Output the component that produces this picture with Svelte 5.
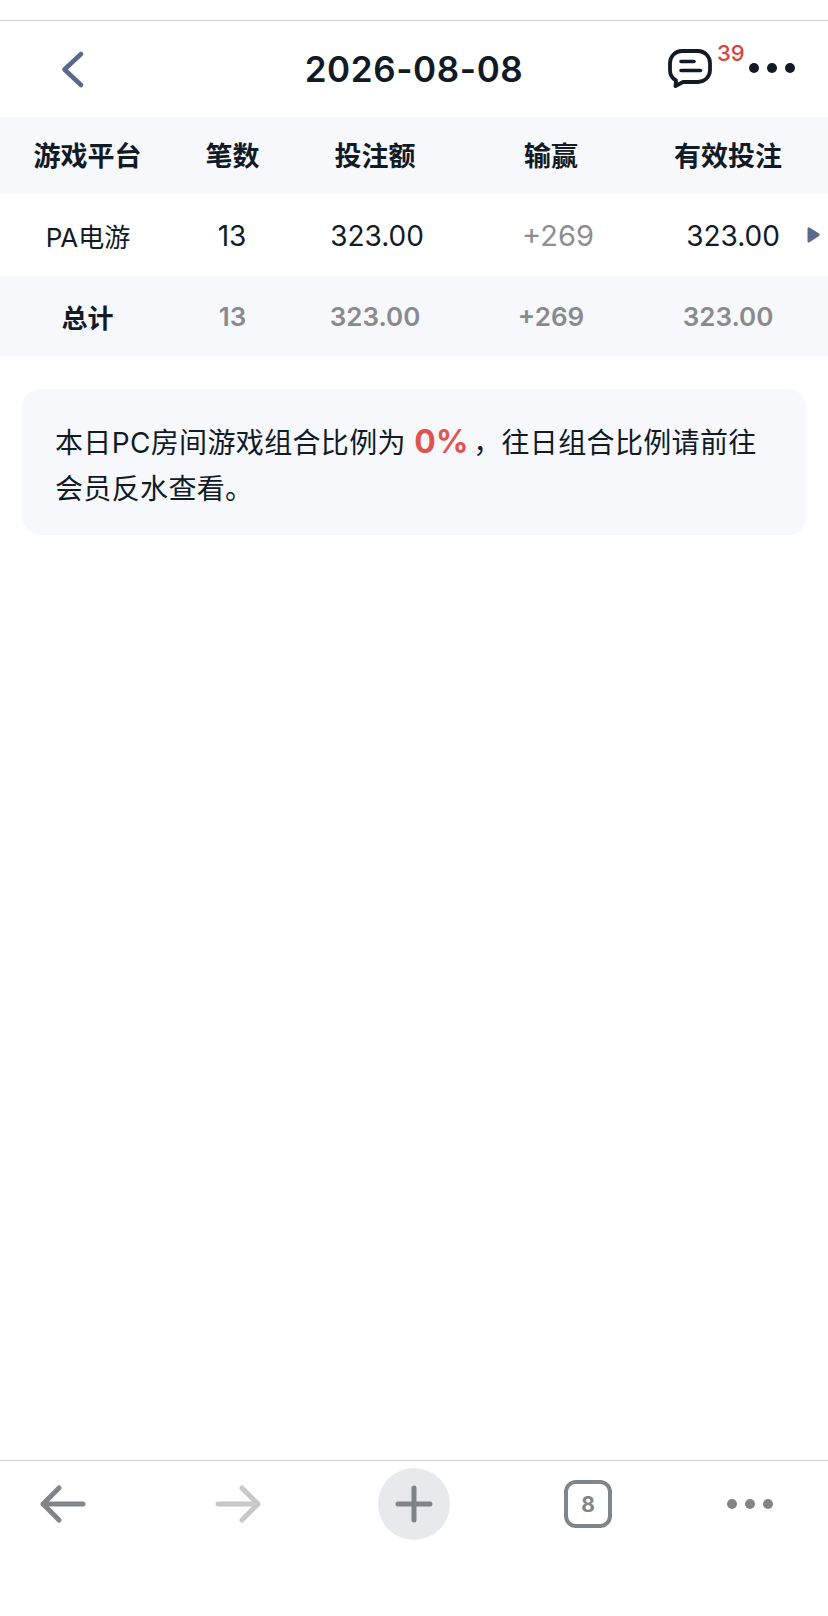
<script lang="ts">
	const head = ['游戏平台', '笔数', '投注额', '输赢', '有效投注'];
	const total = ['总计', '13', '323.00', '+269', '323.00'];
</script>

<div class="page">
	<header class="nav">
		<button class="back" type="button" aria-label="返回">
			<svg width="26" height="38" viewBox="0 0 26 38" fill="none">
				<path d="M22 3 L5.5 18.5 L22 34" stroke="#5a6a8c" stroke-width="4.5" stroke-linecap="round" stroke-linejoin="round" />
			</svg>
		</button>
		<h1>2026-08-08</h1>
		<div class="actions">
			<span class="msg">
				<svg width="46" height="42" viewBox="0 0 46 42" fill="none">
					<path d="M14 2 H30 A12 12 0 0 1 42 14 V21 A12 12 0 0 1 30 33 H15 L7.5 37 L8 31.5 A12 12 0 0 1 2 21 V14 A12 12 0 0 1 14 2 Z" stroke="#121a26" stroke-width="3.8" stroke-linejoin="round" />
					<path d="M13 12.5 H26 M13 21.5 H32.5" stroke="#121a26" stroke-width="3.6" stroke-linecap="round" />
				</svg>
				<sup>39</sup>
			</span>
			<span class="dots"><i></i><i></i><i></i></span>
		</div>
	</header>

	<div class="grid head">
		{#each head as label}
			<span>{label}</span>
		{/each}
	</div>

	<div class="grid row">
		<span class="game">PA电游</span>
		<span>13</span>
		<span>323.00</span>
		<span class="win">+269</span>
		<span>323.00</span>
		<svg class="more" width="14" height="18" viewBox="0 0 14 18"><path d="M2.5 1.5 L12 7.5 Q13.5 8.7 12 10 L2.5 16.2 Q0.5 17.2 0.5 15 V3 Q0.5 0.5 2.5 1.5 Z" fill="#5a6a8c" /></svg>
	</div>

	<div class="grid sum">
		{#each total as value, i}
			<span class:label={i === 0}>{value}</span>
		{/each}
	</div>

	<p class="note">本日PC房间游戏组合比例为 <b>0%</b> ，往日组合比例请前往会员反水查看。</p>

	<nav class="bar">
		<svg width="48" height="40" viewBox="0 0 48 40" fill="none" stroke="#808589" stroke-width="5" stroke-linecap="round" stroke-linejoin="round">
			<path d="M44 20 H4 M20 4 L4 20 L20 36" />
		</svg>
		<svg width="48" height="40" viewBox="0 0 48 40" fill="none" stroke="#c8c8c8" stroke-width="5" stroke-linecap="round" stroke-linejoin="round">
			<path d="M4 20 H44 M28 4 L44 20 L28 36" />
		</svg>
		<span class="add">
			<svg width="38" height="38" viewBox="0 0 38 38" fill="none" stroke="#7f8489" stroke-width="5" stroke-linecap="round">
				<path d="M19 3 V35 M3 19 H35" />
			</svg>
		</span>
		<span class="tabs">8</span>
		<span class="dots grey"><i></i><i></i><i></i></span>
	</nav>
</div>

<style>
	:global(body) {
		margin: 0;
		background: #fff;
	}

	.page {
		position: relative;
		display: flex;
		flex-direction: column;
		height: 1616px;
		box-sizing: border-box;
		padding-top: 20px;
		overflow: hidden;
		color: #121a26;
		font-family: Inter, 'Noto Sans CJK SC', sans-serif;
	}

	.nav {
		display: flex;
		align-items: center;
		justify-content: center;
		position: relative;
		height: 97px;
		border-top: 1px solid #cfcfd1;
		box-sizing: border-box;
	}

	.back {
		position: absolute;
		left: 59px;
		top: 30px;
		border: 0;
		background: none;
		padding: 0;
		height: 38px;
	}

	h1 {
		margin: 0;
		font-size: 35px;
		font-weight: 600;
		letter-spacing: 0.6px;
		line-height: 1;
	}

	.actions {
		position: absolute;
		right: 33px;
		top: 23px;
		display: flex;
		align-items: center;
	}

	.msg {
		position: relative;
		display: block;
		width: 46px;
		height: 42px;
		margin-right: 35px;
		top: 5px;
	}

	.msg sup {
		position: absolute;
		left: 49px;
		top: -7px;
		color: #d9423a;
		font-size: 22px;
		font-weight: 500;
		line-height: 1;
	}

	.dots {
		display: flex;
		gap: 8px;
		margin-top: 6px;
	}

	.dots i {
		width: 10px;
		height: 10px;
		border-radius: 50%;
		background: #121a26;
	}

	.grid {
		display: grid;
		align-items: center;
		text-align: center;
		grid-template-columns: 175px 115px 170px 182px 172px;
	}

	.head {
		height: 77px;
		box-sizing: border-box;
		padding-bottom: 2px;
		background: #f6f8fc;
		font-size: 27px;
		font-weight: 700;
	}

	.row {
		position: relative;
		height: 82px;
		padding-top: 1px;
		box-sizing: border-box;
		font-size: 28px;
		grid-template-columns: 176px 112px 178px 184px 166px;
	}

	.game {
		font-size: 26px;
	}

	.win {
		color: #8e8e8e;
		font-size: 29px;
	}

	.more {
		position: absolute;
		right: 7px;
		top: 32px;
	}

	.sum {
		height: 80px;
		background: #f6f8fc;
		color: #8a8a8c;
		font-size: 26px;
		font-weight: 600;
	}

	.label {
		color: #121a26;
		font-weight: 700;
	}

	.note {
		margin: 33px 22px 0;
		width: 784px;
		height: 146px;
		box-sizing: border-box;
		padding: 30px 33px;
		border-radius: 18px;
		background: #f6f8fc;
		font-size: 28px;
		letter-spacing: 0.35px;
		line-height: 46px;
	}

	.note b {
		margin-right: -4px;
		color: #e0544c;
		font-size: 32px;
		font-weight: 700;
	}

	.bar {
		position: absolute;
		left: 0;
		right: 0;
		top: 1460px;
		height: 156px;
		border-top: 1px solid #cfcfd1;
		box-sizing: border-box;
	}

	.bar > * {
		position: absolute;
	}

	.bar svg:nth-child(1) {
		left: 39px;
		top: 23px;
	}

	.bar svg:nth-child(2) {
		left: 214px;
		top: 23px;
	}

	.add {
		left: 378px;
		top: 7px;
		width: 72px;
		height: 72px;
		border-radius: 50%;
		background: #e8e9ed;
		display: grid;
		place-items: center;
	}

	.tabs {
		left: 564px;
		top: 19px;
		width: 48px;
		height: 48px;
		box-sizing: border-box;
		border: 4px solid #808589;
		border-radius: 12px;
		display: grid;
		place-items: center;
		color: #808589;
		font-size: 21px;
		font-weight: 700;
	}

	.grey {
		left: 727px;
		top: 38px;
		margin: 0;
	}

	.grey i {
		background: #808589;
	}
</style>
